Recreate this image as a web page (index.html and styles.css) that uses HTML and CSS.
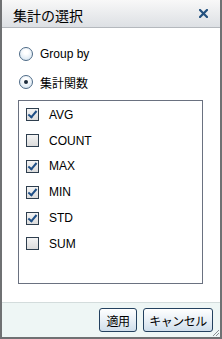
FILE: index.html
```html
<!DOCTYPE html>
<html lang="ja">
<head>
    <meta charset="UTF-8">
    <title>集計の選択</title>
    <link rel="stylesheet" href="styles.css">
</head>
<body>
    <div class="dialog">
        <div class="titlebar">
            <span class="title">集計の選択</span>
            <svg class="close" width="9" height="9" viewBox="0 0 9 9">
                <path d="M1 1 L8 8 M8 1 L1 8" stroke="#22507e" stroke-width="2.2" stroke-linecap="square"/>
            </svg>
        </div>
        <div class="content">
            <div class="radio-row">
                <span class="radio"></span>
                <span class="label">Group by</span>
            </div>
            <div class="radio-row">
                <span class="radio checked"></span>
                <span class="label">集計関数</span>
            </div>
            <div class="list">
                <div class="item"><span class="check on"></span><span class="label">AVG</span></div>
                <div class="item"><span class="check"></span><span class="label">COUNT</span></div>
                <div class="item"><span class="check on"></span><span class="label">MAX</span></div>
                <div class="item"><span class="check on"></span><span class="label">MIN</span></div>
                <div class="item"><span class="check on"></span><span class="label">STD</span></div>
                <div class="item"><span class="check"></span><span class="label">SUM</span></div>
            </div>
        </div>
        <div class="footer">
            <button class="btn">適用</button>
            <button class="btn wide">キャンセル</button>
            <svg class="grip" width="8" height="8" viewBox="0 0 8 8">
                <path d="M7 1 L1 7 M7 4 L4 7 M7 7 L7 7" stroke="#8a8f94" stroke-width="1"/>
            </svg>
        </div>
    </div>
</body>
</html>
```

FILE: styles.css
```css
body {
    margin: 0;
    padding: 0;
    font-family: "Liberation Sans", "Noto Sans CJK JP", sans-serif;
    font-size: 12px;
    color: #000;
    background: #fff;
}
.dialog {
    width: 222px;
    height: 339px;
    box-sizing: border-box;
    border: 2px solid #6f7173;
    border-top: none;
    display: flex;
    flex-direction: column;
}
.titlebar {
    height: 28px;
    box-sizing: border-box;
    border-bottom: 1px solid #b4b8bd;
    background: linear-gradient(#f8f8f8, #dde0e4);
    display: flex;
    align-items: center;
    justify-content: space-between;
    padding: 3px 12px 0 11px;
}
.title {
    font-family: "Noto Sans CJK JP", sans-serif;
    font-size: 14px;
    line-height: 16px;
}
.close {
    margin-top: -3px;
}
.content {
    flex: 1;
    background: #fff;
    padding: 16px 17px 0 16px;
}
.radio-row {
    display: flex;
    align-items: center;
    height: 20px;
    margin-bottom: 8px;
}
.radio {
    width: 12px;
    height: 12px;
    margin-left: 1px;
    margin-right: 7px;
    border: 1px solid #4d6a86;
    border-radius: 50%;
    background: radial-gradient(circle at 50% 35%, #ffffff 20%, #d3e3f0 90%);
    position: relative;
}
.radio.checked::after {
    content: "";
    position: absolute;
    left: 4px;
    top: 4px;
    width: 4px;
    height: 4px;
    border-radius: 50%;
    background: #1c2c3c;
}
.list {
    height: 184px;
    box-sizing: border-box;
    border: 1px solid #6a7180;
    padding: 1px 0 0 7px;
}
.item {
    display: flex;
    align-items: center;
    height: 25.8px;
}
.check {
    width: 11px;
    height: 11px;
    margin-right: 10px;
    border: 1px solid #2e3e4e;
    background: linear-gradient(#f4f4f4, #dcdcdc);
    position: relative;
}
.check.on::after {
    content: "";
    position: absolute;
    left: 3px;
    top: 0px;
    width: 3px;
    height: 7px;
    border: solid #1f4f86;
    border-width: 0 2.5px 2.5px 0;
    transform: rotate(40deg);
}
.footer {
    height: 35px;
    box-sizing: border-box;
    border-top: 1px solid #d3dcdc;
    background: #eef6f5;
    display: flex;
    justify-content: flex-end;
    align-items: flex-start;
    padding: 5px 7px 0 0;
    gap: 6px;
    position: relative;
}
.btn {
    height: 24px;
    width: 38px;
    padding: 0;
    border: 1px solid #23415f;
    border-radius: 3px;
    background: linear-gradient(#ffffff, #e9f0f6 50%, #cfdeeb);
    font-family: "Noto Sans CJK JP", sans-serif;
    font-size: 12px;
    color: #000;
    letter-spacing: -0.5px;
}
.btn.wide {
    width: 70px;
}
.grip {
    position: absolute;
    right: 0;
    bottom: 0;
}
```
